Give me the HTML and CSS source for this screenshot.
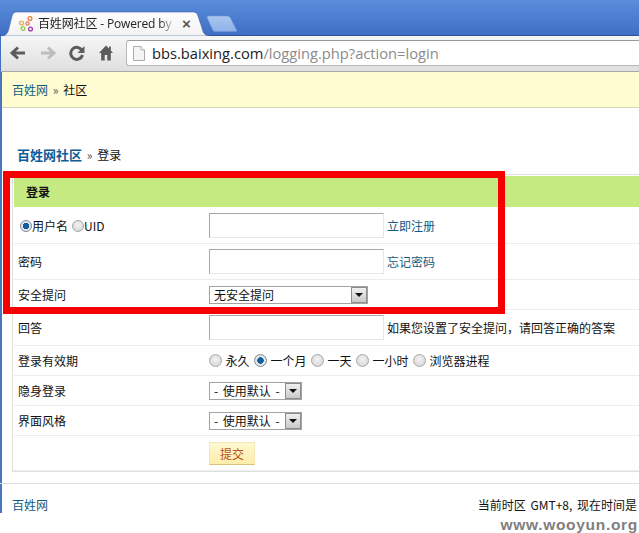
FILE: index.html
```html
<!DOCTYPE html>
<html lang="zh-CN">
<head>
<meta charset="utf-8">
<title>百姓网社区</title>
<link rel="stylesheet" href="styles.css">
</head>
<body>
<div class="window">
  <header class="tabstrip">
    <svg class="tab-shape" width="240" height="36" viewBox="0 0 240 36" aria-hidden="true">
      <defs>
        <linearGradient id="tabfill" x1="0" y1="0" x2="0" y2="1"><stop offset="0" stop-color="#fdfdfd"/><stop offset="1" stop-color="#f3f3f3"/></linearGradient>
        <linearGradient id="newfill" x1="0" y1="0" x2="0" y2="1"><stop offset="0" stop-color="#a9c6f0"/><stop offset="1" stop-color="#8db2e8"/></linearGradient>
      </defs>
      <path d="M1 36C6 36 8 33 9 28L12 16C13 13 14 12 17 12H193C196 12 197 13 198 16L202 28C203 33 205 36 210 36Z" fill="url(#tabfill)" stroke="#3a62a8" stroke-width=".6"/>
      <path d="M207 17.500C207 16.500 208 16 209 16H227C229 16 230 17 231 19L236.500 30C237 31 236.500 31.500 235 31.500H216C214 31.500 213 31 212.500 29.500Z" fill="url(#newfill)" stroke="#6f97d6" stroke-width=".6"/>
    </svg>
    <svg class="favicon" width="16" height="16" viewBox="0 0 16 16" aria-hidden="true">
      <g fill="none" stroke-width="1.300">
        <circle cx="11" cy="2.500" r="1.900" stroke="#e8843a"/>
        <circle cx="2.500" cy="7" r="1.900" stroke="#e0b050"/>
        <circle cx="8.500" cy="7.500" r="1.600" stroke="#e07a6a"/>
        <circle cx="4" cy="12.500" r="1.900" stroke="#9cc84a"/>
        <circle cx="11.500" cy="13" r="1.900" stroke="#a03ca8"/>
      </g>
    </svg>
    <span class="tab-title">百姓网社区 - Powered by</span>
    <span class="tab-close">×</span>
  </header>

  <div class="toolbar">
    <svg class="tool" width="18" height="16" viewBox="0 0 18 16" aria-hidden="true"><path d="M16 8H4M9 2.500L3 8L9 13.500" fill="none" stroke="#5c5c5c" stroke-width="3"/></svg>
    <svg class="tool" width="18" height="16" viewBox="0 0 18 16" aria-hidden="true"><path d="M2 8H14M9 2.500L15 8L9 13.500" fill="none" stroke="#bdbdbd" stroke-width="3"/></svg>
    <svg class="tool" width="16" height="16" viewBox="0 0 16 16" aria-hidden="true"><path d="M13 5.500A6 6 0 1 0 13.500 10" fill="none" stroke="#5c5c5c" stroke-width="3"/><path d="M15.500 1V8H8.500Z" fill="#5c5c5c"/></svg>
    <svg class="tool home" width="14" height="16" viewBox="0 0 16 16" preserveAspectRatio="none" aria-hidden="true"><path d="M8 .5L0 8H2.500V15.500H6.500V10H9.500V15.500H13.500V8H16L13.500 5.500V1.500H11.500V3.500Z" fill="#5c5c5c"/></svg>
    <div class="omnibox">
      <svg width="12" height="15" viewBox="0 0 12 15" aria-hidden="true"><path d="M.5.5H8L11.500 4V14.500H.5Z" fill="#f4f4f4" stroke="#aaa"/><path d="M8 .5V4H11.500" fill="#fff" stroke="#aaa"/></svg>
      <span class="url"><span class="url-host">bbs.baixing.com</span>/logging.php?action=login</span>
    </div>
  </div>

  <main class="page">
    <nav class="topnav"><a href="#">百姓网</a> <span class="sep">»</span> 社区</nav>
    <div class="crumb"><a href="#">百姓网社区</a> <span class="sep">»</span> 登录</div>

    <form class="box">
      <h1 class="box-title">登录</h1>
      <div class="row tall">
        <div class="label"><input class="radio" type="radio" name="who" checked><span>用户名</span><input class="radio" type="radio" name="who"><span>UID</span></div>
        <div class="field"><input class="text" type="text"><a href="#" class="aside">立即注册</a></div>
      </div>
      <div class="row tall">
        <div class="label">密码</div>
        <div class="field"><input class="text" type="text"><a href="#" class="aside">忘记密码</a></div>
      </div>
      <div class="row short">
        <div class="label">安全提问</div>
        <div class="field"><span class="select wide"><span class="select-text">无安全提问</span><span class="select-btn"></span></span></div>
      </div>
      <div class="row tall">
        <div class="label">回答</div>
        <div class="field"><input class="text" type="text"><span class="aside plain">如果您设置了安全提问，请回答正确的答案</span></div>
      </div>
      <div class="row short">
        <div class="label">登录有效期</div>
        <div class="field options">
          <input class="radio" type="radio" name="t"><span>永久</span>
          <input class="radio" type="radio" name="t" checked><span>一个月</span>
          <input class="radio" type="radio" name="t"><span>一天</span>
          <input class="radio" type="radio" name="t"><span>一小时</span>
          <input class="radio" type="radio" name="t"><span>浏览器进程</span>
        </div>
      </div>
      <div class="row short">
        <div class="label">隐身登录</div>
        <div class="field"><span class="select"><span class="select-text">- 使用默认 -</span><span class="select-btn"></span></span></div>
      </div>
      <div class="row short">
        <div class="label">界面风格</div>
        <div class="field"><span class="select"><span class="select-text">- 使用默认 -</span><span class="select-btn"></span></span></div>
      </div>
      <div class="row submit-row">
        <div class="label"></div>
        <div class="field"><button class="submit" type="button">提交</button></div>
      </div>
    </form>

    <footer class="footer">
      <a href="#">百姓网</a>
      <span class="clock">当前时区 GMT+8, 现在时间是</span>
    </footer>
  </main>

  <div class="highlight"></div>
  <div class="watermark">www.wooyun.org</div>
</div>
</body>
</html>
```
FILE: styles.css
```css
* { box-sizing: border-box; }
html, body { margin: 0; height: 100%; overflow: hidden; background: #fff; }
body { font: 12px/16px "Noto Sans CJK SC", "Liberation Sans", sans-serif; color: #111; }
a { color: #0f5b83; text-decoration: none; }

.window { position: relative; width: 639px; height: 533px; overflow: hidden; }

.tabstrip {
  position: relative; height: 36px; display: flex; align-items: center;
  padding: 13px 0 0 19px;
  background: linear-gradient(#5a8ddc, #3f6fc4);
  border-bottom: 1px solid #2f548f;
}
.tab-shape { position: absolute; left: 0; top: 0; }
.favicon { position: relative; flex: none; margin-top: -1px; }
.tab-title {
  position: relative; width: 138px; margin-left: 3px; white-space: nowrap; color: #222;
  font: 12px/16px "Open Sans", "Noto Sans CJK SC", sans-serif; letter-spacing: -.15px;
  -webkit-mask-image: linear-gradient(90deg, #000 88%, transparent);
  mask-image: linear-gradient(90deg, #000 88%, transparent);
}
.tab-close { position: relative; margin-left: 6px; font: bold 15px/16px "Liberation Sans", sans-serif; color: #555; }

.toolbar {
  height: 36px; display: flex; align-items: center; gap: 12px; padding: 0 0 1px 8px;
  background: linear-gradient(#f6f6f6, #dfdfdf);
  border-bottom: 1px solid #a9a9a9; border-left: 1px solid #3f6fc4;
}
.tool { flex: none; }
.home { margin-left: 2px; }
.omnibox {
  flex: 1; height: 26px; margin-left: 1px; margin-right: -4px; padding-left: 6px;
  display: flex; align-items: center; gap: 7px;
  background: #fff; border: 1px solid #b8b8b8; border-top-color: #9a9a9a; border-right: 0;
  border-radius: 3px 0 0 3px;
}
.url { font: 14.7px/20px "Open Sans", sans-serif; color: #8b8b8b; white-space: nowrap; }
.url-host { color: #222; }

.page { border-left: 2px solid #4a76bd; }
.topnav {
  height: 36px; padding: 10px 0 0 10px; background: #fffcd0; border-bottom: 1px solid #d5d5c4;
}
.sep { color: #555; margin: 0 2px; }
.crumb { padding: 39px 0 0 15px; height: 66px; font-size: 12px; line-height: 16px; }
.crumb a { font-weight: 700; font-size: 13px; color: #0f5b93; }

.box {
  margin-left: 10px; border: 1px solid #dfdfdf; border-right: 0; padding: 1px 0 0 1px;
  box-shadow: inset 0 -1px 0 #eee;
}
.box-title {
  margin: 0 0 1px; height: 31px; padding: 8px 0 0 12px; background: #c6ea82;
  font-size: 12px; line-height: 16px; font-weight: 700; color: #111;
}
.row { display: flex; border-bottom: 1px solid #ececec; }
.tall { height: 36px; }
.short { height: 30px; }
.submit-row { height: 35px; border-bottom: 0; }
.label { width: 195px; flex: none; padding-left: 4px; display: flex; align-items: center; }
.field { display: flex; align-items: center; flex: 1; white-space: nowrap; }

.text {
  width: 175px; height: 25px; margin: 0; padding: 0; background: #fff;
  border: 1px solid #e6e6e6; border-top-color: #a8a8a8; border-left-color: #a8a8a8;
  outline: 0;
}
.aside { margin-left: 3px; font-size: 12px; }
.plain { color: #111; }

.radio {
  appearance: none; -webkit-appearance: none; flex: none;
  width: 13px; height: 13px; margin: 0; border-radius: 50%;
  border: 1px solid #a8a8a8; background: radial-gradient(circle at 50% 40%, #f4f4f4, #cfcfcf);
}
.radio:checked { background: radial-gradient(circle, #0f5f9e 0 3px, #e6e6e6 3.5px); border-color: #7a8a9a; }
.label .radio { width: 12px; height: 12px; margin: 0 0 0 2px; }
.label span + .radio { margin-left: 4px; }
.options span { margin: 0 4.5px 0 3.5px; }

.select {
  display: flex; align-items: center; justify-content: space-between;
  width: 93px; height: 18px; background: #fff; border: 1px solid #a3a3a3; padding-left: 4px;
}
.select.wide { width: 159px; }
.select-text { line-height: 16px; word-spacing: 2px; }
.select-btn {
  position: relative; width: 16px; height: 16px; border: 1px solid #8d8d8d;
  background: linear-gradient(#f0f0f0, #c9c9c9);
}
.select-btn::after {
  content: ""; position: absolute; left: 3px; top: 5px;
  border: 4px solid transparent; border-top: 4px solid #111; border-bottom: 0;
}

.submit {
  width: 46px; height: 23px; padding: 0;
  font: 12px/16px "Noto Sans CJK SC", sans-serif; color: #b8521c;
  background: linear-gradient(#fff8d0, #fdeeac); border: 1px solid #f4e8b4; border-bottom-color: #d9c27a;
}

.footer {
  display: flex; justify-content: space-between; align-items: center;
  margin: 11px 0 0 -2px; padding: 13px 2px 0 12px; border-top: 1px solid #dedede;
}
.clock { white-space: nowrap; word-spacing: 2px; margin-top: -1px; }

.highlight {
  position: absolute; left: 3px; top: 171px; width: 502px; height: 143px;
  border: 7px solid #f60000;
}
.watermark {
  position: absolute; right: 1px; top: 516px;
  font: 700 15.5px/18px "Liberation Sans", sans-serif; letter-spacing: .7px; color: #808080;
}
```
